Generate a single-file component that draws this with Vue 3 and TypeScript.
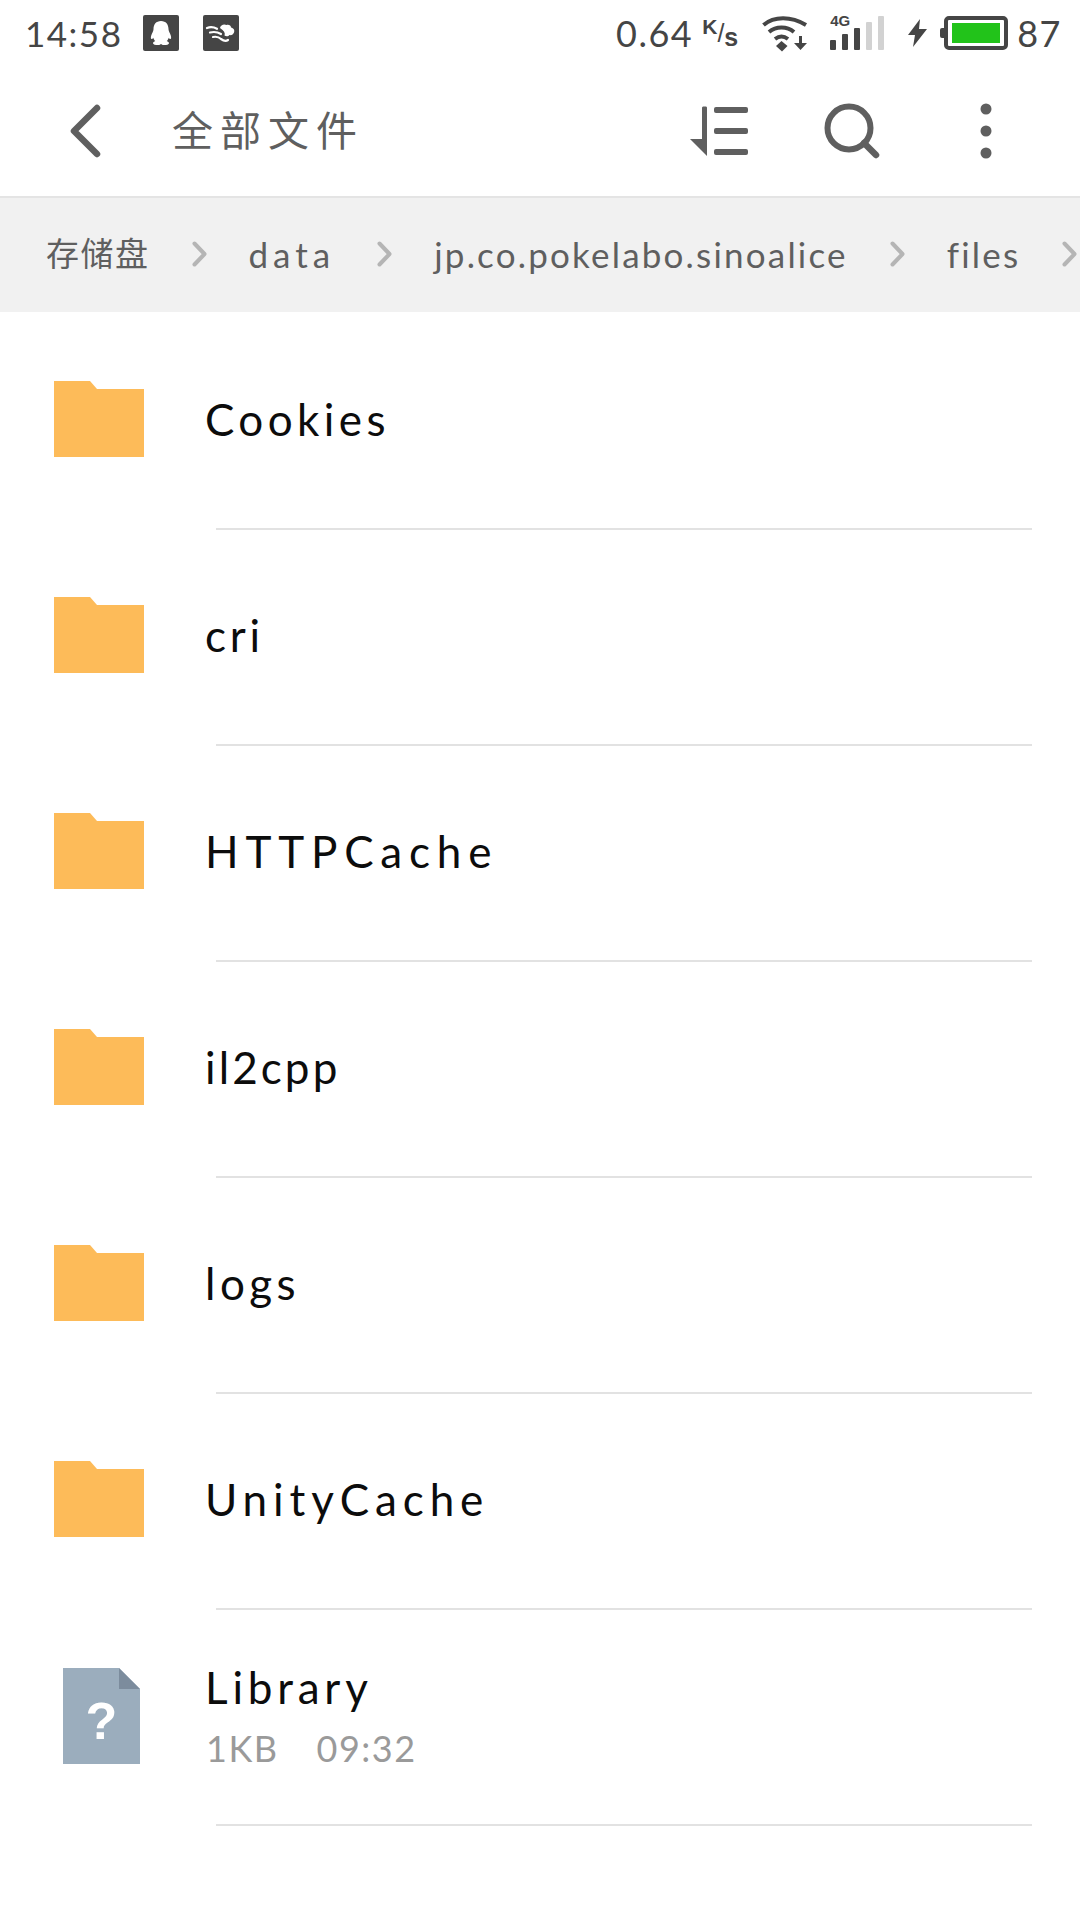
<script setup lang="ts">
interface Crumb {
  label: string
  track: number
}

interface FileRow {
  name: string
  track: number
  meta?: string[]
  kind: 'folder' | 'unknown'
}

const crumbs: Crumb[] = [
  { label: '存储盘', track: 1.5 },
  { label: 'data', track: 5 },
  { label: 'jp.co.pokelabo.sinoalice', track: 2.2 },
  { label: 'files', track: 2.2 }
]

// the letter spacing per name keeps each label as wide as the reference
const rows: FileRow[] = [
  { name: 'Cookies', track: 4.4, kind: 'folder' },
  { name: 'cri', track: 3.7, kind: 'folder' },
  { name: 'HTTPCache', track: 6.8, kind: 'folder' },
  { name: 'il2cpp', track: 3.1, kind: 'folder' },
  { name: 'logs', track: 4.5, kind: 'folder' },
  { name: 'UnityCache', track: 5.9, kind: 'folder' },
  { name: 'Library', track: 4.8, kind: 'unknown', meta: ['1KB', '09:32'] }
]
</script>

<template>
  <div class="page">
    <!-- status bar -->
    <div class="status">
      <span class="time">14:58</span>
      <svg class="badge" width="36" height="36" viewBox="0 0 36 36">
        <rect width="36" height="36" rx="2" fill="#454545" />
        <path d="M18 6c-5 0-7.500 3.600-7.500 8 0 1.500-.5 2.500-1.500 4.500-1.300 2.600-1.500 5-.6 5.500.6.300 1.300-.3 1.900-1.300.3 1.300 1 2.500 2 3.300-1.300.5-2.300 1.200-2.300 2.200 0 1.300 2.500 1.800 5 1.800 1.500 0 2.500-.5 3-1 .5.500 1.500 1 3 1 2.500 0 5-.5 5-1.800 0-1-1-1.700-2.300-2.200 1-.8 1.700-2 2-3.300.6 1 1.300 1.600 1.900 1.300.9-.5.7-2.900-.6-5.500-1-2-1.500-3-1.500-4.500 0-4.400-2.500-8-7.500-8z" fill="#fff" />
      </svg>
      <svg class="badge second" width="36" height="36" viewBox="0 0 36 36">
        <rect width="36" height="36" rx="2" fill="#454545" />
        <path d="M4 13c4-1.500 7-.8 10 .8M7 17.500c4-1 8-.3 11 1.500M10 22c3-.6 6 0 8 2 2 1.500 5 2.500 7 1" fill="none" stroke="#fff" stroke-width="2.200" stroke-linecap="round" />
        <path d="M17 13c.5-3 4-4.500 6.500-3 2-.8 4.500.3 4.500 2.500 2.500.5 4 2.500 3 5-.8 2-2.500 3-4.500 2.500-1 1.500-3.500 1.800-5 .5 1-2.500-.5-5-4.500-7.500z" fill="#fff" />
      </svg>
      <span class="spacer"></span>
      <span class="speed">0.64</span>
      <span class="unit"><b>K</b>/<i>s</i></span>
      <svg class="wifi" width="46" height="38" viewBox="0 0 46 38">
        <g fill="none" stroke="#454545" stroke-width="4">
          <path d="M1.500 11C12 2 29 2 44 11" />
          <path d="M7 18c7-6 18-6 25 0" />
          <path d="M13 25c4-3 9-3 13 0" />
        </g>
        <path d="M19.500 27l6 5-5.500 5.500L14 32z" fill="#454545" />
        <path d="M37 22h3v7h5l-6.500 7-6.500-7h5z" fill="#454545" />
      </svg>
      <div class="signal">
        <span class="g4">4G</span>
        <span class="bar on" style="height: 10px"></span>
        <span class="bar on" style="height: 16px"></span>
        <span class="bar on" style="height: 22px"></span>
        <span class="bar" style="height: 28px"></span>
        <span class="bar" style="height: 34px"></span>
      </div>
      <svg class="bolt" width="19" height="28" viewBox="0 0 19 28">
        <path d="M12 0L0 16h7L5 28l14-18h-8z" fill="#454545" />
      </svg>
      <div class="battery">
        <span class="nub"></span>
        <span class="cell"><span class="level"></span></span>
      </div>
      <span class="percent">87</span>
    </div>

    <!-- toolbar -->
    <div class="toolbar">
      <svg class="back" width="34" height="54" viewBox="0 0 34 54">
        <path d="M29 4L6 27l23 23" fill="none" stroke="#5f5f5f" stroke-width="6.500" stroke-linecap="round" stroke-linejoin="round" />
      </svg>
      <span class="title">全部文件</span>
      <span class="spacer"></span>
      <svg class="sort" width="58" height="50" viewBox="0 0 58 50">
        <path d="M12 2c0-1 .7-1.500 1.500-1.500h2c1 0 1.500.5 1.500 1.500v48L0 33h12z" fill="#5f5f5f" />
        <rect x="24" y="1" width="34" height="6" rx="2" fill="#5f5f5f" />
        <rect x="24" y="22" width="34" height="6" rx="2" fill="#5f5f5f" />
        <rect x="24" y="43" width="34" height="6" rx="2" fill="#5f5f5f" />
      </svg>
      <svg class="search" width="56" height="56" viewBox="0 0 56 56">
        <circle cx="25" cy="25" r="21.500" fill="none" stroke="#5f5f5f" stroke-width="6" />
        <path d="M40 40l12 12" stroke="#5f5f5f" stroke-width="6.500" stroke-linecap="round" />
      </svg>
      <svg class="more" width="12" height="56" viewBox="0 0 12 56">
        <circle cx="6" cy="6" r="5.500" fill="#5f5f5f" />
        <circle cx="6" cy="28" r="5.500" fill="#5f5f5f" />
        <circle cx="6" cy="50" r="5.500" fill="#5f5f5f" />
      </svg>
    </div>

    <!-- breadcrumb -->
    <div class="crumbs">
      <template v-for="crumb in crumbs" :key="crumb.label">
        <span class="crumb" :style="{ letterSpacing: crumb.track + 'px' }">{{ crumb.label }}</span>
        <svg class="chev" width="15" height="26" viewBox="0 0 15 26">
          <path d="M2.500 2.500L12.500 13 2.500 23.500" fill="none" stroke="#b5b5b5" stroke-width="4" stroke-linecap="round" stroke-linejoin="round" />
        </svg>
      </template>
    </div>

    <!-- file list -->
    <div class="list">
      <template v-for="row in rows" :key="row.name">
        <div class="row">
          <div class="icon-slot">
            <svg v-if="row.kind === 'folder'" width="90" height="76" viewBox="0 0 90 76">
              <path d="M0 0h36l7 8h47v68H0z" fill="#fdbb59" />
            </svg>
            <svg v-else class="doc" width="77" height="96" viewBox="0 0 77 96">
              <path d="M0 0h56l21 21v75H0z" fill="#9badbd" />
              <path d="M56 0l21 21H56z" fill="#7c8c9d" />
              <text x="38.500" y="71" text-anchor="middle" class="mark">?</text>
            </svg>
          </div>
          <div class="text">
            <div class="name" :style="{ letterSpacing: row.track + 'px' }">{{ row.name }}</div>
            <div v-if="row.meta" class="meta">
              <span v-for="m in row.meta" :key="m">{{ m }}</span>
            </div>
          </div>
        </div>
        <div class="divider"></div>
      </template>
    </div>
  </div>
</template>

<style>
html, body {
  margin: 0;
  background: #fff;
}
</style>

<style scoped>
.page {
  width: 1080px;
  height: 1920px;
  overflow: hidden;
  background: #fff;
  font-family: Lato, "Noto Sans CJK SC", sans-serif;
}

.spacer {
  flex: 1;
}

/* status bar */
.status {
  height: 66px;
  display: flex;
  align-items: center;
  padding: 0 18px 0 25px;
  box-sizing: border-box;
  color: #454545;
}

.time {
  font-size: 35px;
  letter-spacing: 1.5px;
  width: 118px;
}

.badge.second {
  margin-left: 24px;
}

.speed {
  font-size: 36px;
  letter-spacing: 1.5px;
}

.unit {
  margin-left: 9px;
  width: 38px;
  font-size: 25px;
  font-family: "Liberation Sans", sans-serif;
  white-space: nowrap;
}

.unit b {
  font-weight: 700;
  position: relative;
  top: -8px;
  font-size: 21px;
}

.unit i {
  font-style: normal;
  font-weight: 700;
  position: relative;
  top: 4px;
}

.wifi {
  margin-left: 22px;
}

.signal {
  position: relative;
  margin-left: 22px;
  display: flex;
  align-items: flex-end;
  gap: 6px;
  height: 34px;
}

.g4 {
  position: absolute;
  left: 0;
  top: -3px;
  font-family: "Liberation Sans", sans-serif;
  font-size: 15px;
  font-weight: 700;
  line-height: 16px;
}

.bar {
  width: 6px;
  background: #d2d2d2;
  border-radius: 1px;
}

.bar.on {
  background: #454545;
}

.bolt {
  margin-left: 24px;
}

.battery {
  margin-left: 13px;
  display: flex;
  align-items: center;
}

.nub {
  width: 4px;
  height: 10px;
  background: #454545;
  border-radius: 2px 0 0 2px;
}

.cell {
  width: 64px;
  height: 34px;
  box-sizing: border-box;
  border: 4px solid #454545;
  border-radius: 5px;
  padding: 3px 4px;
  display: flex;
}

.level {
  flex: 1;
  background: #22c31a;
}

.percent {
  margin-left: 9px;
  font-size: 36px;
  letter-spacing: 1.5px;
}

/* toolbar */
.toolbar {
  height: 130px;
  display: flex;
  align-items: center;
  padding: 0 88px 0 68px;
  border-bottom: 2px solid #e4e4e4;
  color: #5f5f5f;
}

.title {
  margin: 0 0 6px 70px;
  font-size: 41px;
  letter-spacing: 7px;
}

.search {
  margin-left: 76px;
}

.more {
  margin-left: 100px;
}

/* breadcrumb */
.crumbs {
  height: 114px;
  background: #f1f1f1;
  display: flex;
  align-items: center;
  padding: 0 0 2px 46px;
  box-sizing: border-box;
  overflow: hidden;
  white-space: nowrap;
  color: #5f5f5f;
  font-size: 35px;
}

.crumb {
  flex: none;
}

.crumb:first-child {
  font-size: 33px;
  margin-bottom: 4px;
}

.chev {
  flex: none;
  margin: 0 42px;
}

/* file list */
.list {
  padding-top: 2px;
}

.row {
  height: 214px;
  box-sizing: border-box;
  display: flex;
  align-items: center;
  padding: 0 0 5px 54px;
}

.icon-slot {
  width: 151px;
  display: flex;
}

.doc {
  margin: 2px 0 0 9px;
}

.mark {
  font-family: "Liberation Sans", sans-serif;
  font-weight: 700;
  font-size: 52px;
  fill: #fff;
}

.text {
  color: #0c0c0c;
}

.name {
  font-size: 44px;
  line-height: 54px;
}

.meta {
  display: flex;
  gap: 38px;
  margin-top: 13px;
  padding-left: 1px;
  color: #9a9a9a;
  font-size: 36px;
  letter-spacing: 1.5px;
  line-height: 42px;
}

.divider {
  height: 2px;
  margin: 0 48px 0 216px;
  background: #e2e2e2;
}
</style>
